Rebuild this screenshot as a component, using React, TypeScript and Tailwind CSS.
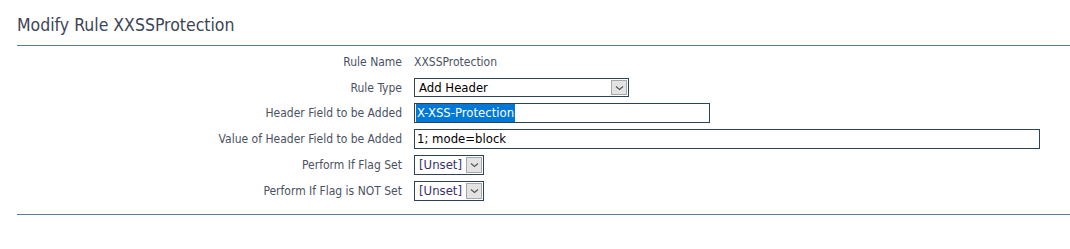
import React from 'react';

const font = { fontFamily: '"DejaVu Sans Condensed", "DejaVu Sans", Verdana, sans-serif' };

const Chevron = () => (
  <svg width="9" height="6" viewBox="0 0 9 6" fill="none">
    <path d="M1 1.5 L4.5 4.5 L8 1.5" stroke="#505860" strokeWidth="1.2" />
  </svg>
);

const SelectBox = ({ value, width, height = 'h-[20px]', color = 'text-black' }: { value: string; width: string; height?: string; color?: string }) => (
  <div className={`flex ${height} ${width} items-stretch border border-[#2e4256] bg-white`}>
    <div className={`flex flex-1 items-center pl-[4px] text-[13px] ${color}`}>{value}</div>
    <div className="m-[1px] flex w-[16px] items-center justify-center border border-[#a8a8a8] bg-[#e3e3e3]">
      <Chevron />
    </div>
  </div>
);

const Row = ({ label, children }: { label: string; children: React.ReactNode }) => (
  <div className="flex items-center">
    <div className="w-[414px] pr-[12px] text-right text-[12px] text-[#4a5262]">{label}</div>
    {children}
  </div>
);

export default function App() {
  return (
    <div className="h-[249px] w-[1070px] bg-white pl-[17px]" style={font}>
      <div className="pt-[14px] pb-[9px] text-[17.5px] leading-[22px] text-[#3b4656]">Modify Rule XXSSProtection</div>
      <div className="h-[1px] bg-[#5b7c96]" />
      <div className="-ml-[17px] flex flex-col gap-[6px] pt-[6px] pb-[13px]">
        <Row label="Rule Name">
          <div className="flex h-[20px] items-center text-[12px] text-[#4a5262]">XXSSProtection</div>
        </Row>
        <Row label="Rule Type">
          <SelectBox value="Add Header" width="w-[215px]" height="h-[19px]" />
        </Row>
        <Row label="Header Field to be Added">
          <div className="flex h-[20px] w-[296px] items-center border border-[#2e4256] bg-white pl-[1px] text-[13px]">
            <span className="bg-[#0078d7] px-[1px] leading-[18px] text-white">X-XSS-Protection</span>
          </div>
        </Row>
        <Row label="Value of Header Field to be Added">
          <div className="flex h-[20px] w-[626px] items-center border border-[#2e4256] bg-white pl-[2px] text-[13px] text-black">
            1; mode=block
          </div>
        </Row>
        <Row label="Perform If Flag Set">
          <SelectBox value="[Unset]" width="w-[70px]" color="text-[#3b2f6e]" />
        </Row>
        <Row label="Perform If Flag is NOT Set">
          <SelectBox value="[Unset]" width="w-[70px]" color="text-[#3b2f6e]" />
        </Row>
      </div>
      <div className="h-[1px] bg-[#5b7c96]" />
    </div>
  );
}
